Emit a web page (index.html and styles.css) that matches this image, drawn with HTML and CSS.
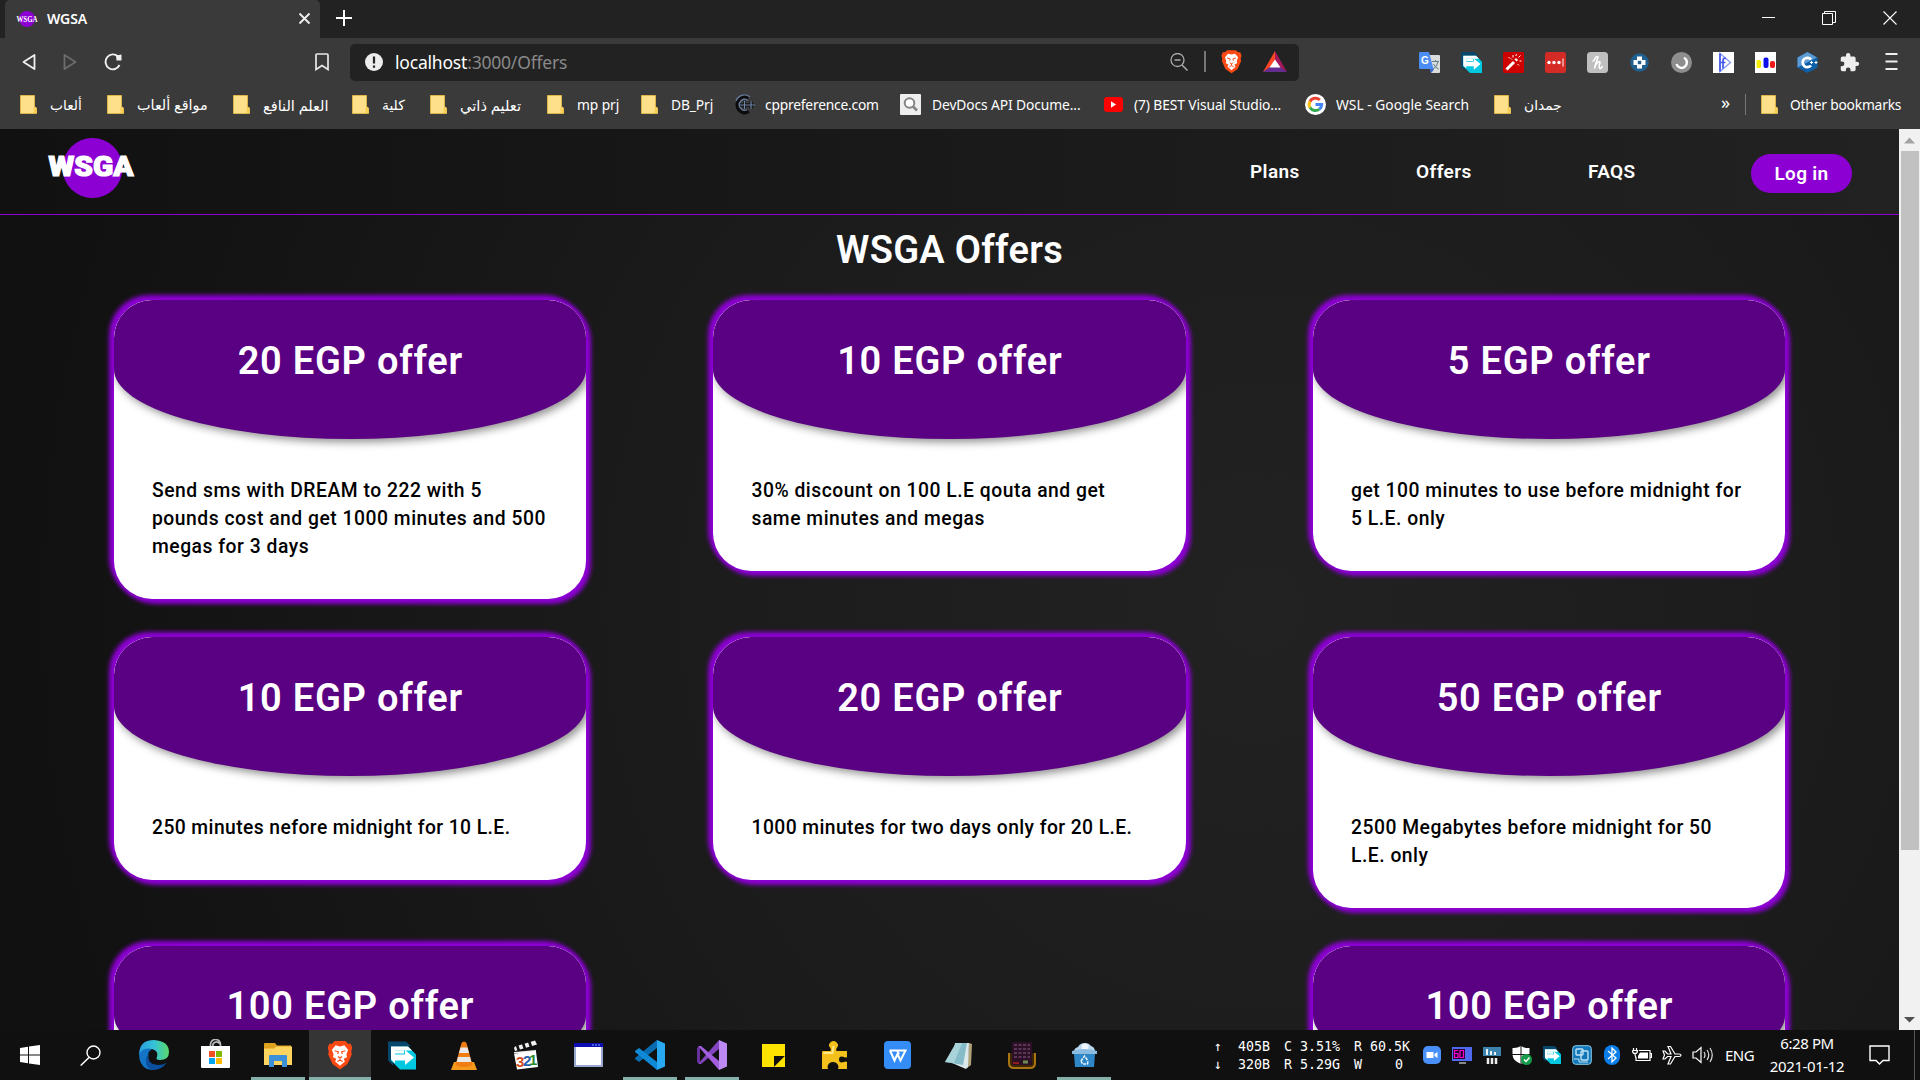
FILE: index.html
```html
<!DOCTYPE html>
<html lang="en">
<head>
<meta charset="utf-8">
<title>WGSA</title>
<link rel="stylesheet" href="styles.css">
</head>
<body>
<svg class="defs" width="0" height="0">
  <symbol id="folder" viewBox="0 0 17 19"><path d="M.5.5h14v11.500l2 1v5.500H.5z" fill="#ffe08a" stroke="#dcb54b"/><path d="M13.500 18v-5l1.500-1.500 1.500 1.500v5z" fill="#f5cf57"/></symbol>
  <symbol id="brave" viewBox="0 0 24 28"><path d="M7 1h10l2.500 2.500 2.500 0 1.500 4-1 3 .5 3-4 9-7 5-7-5-4-9 .5-3-1-3L2 3.500h2.500z" fill="#fb4a14"/><path d="M8 5l4 1 4-1 3.500 4-1.500 4.500.5 2.500-3 1.500 1 2.500-4.500 4-4.500-4 1-2.500-3-1.500.5-2.500L4.500 9z" fill="#fff"/><path d="M7 10l3.500 1-.7 2M17 10l-3.500 1 .7 2M10 15.500l2 1 2-1M12 16.500v2M9.500 20l2.500-1.200 2.500 1.200" fill="none" stroke="#fb4a14" stroke-width="1.100"/></symbol>
  <symbol id="connect" viewBox="0 0 28 28"><path d="M0 0h18l5 5H5v19l-5-5z" fill="#07476b"/><path d="M3 5h17l8 8v15H12l-9-9z" fill="#00c8e0"/><path d="M3 5h17l4 4H7v13l-4-4z" fill="#fff"/><path d="M7 9h9v3H7z" fill="#fff"/><path d="M6 13h11V8.500l9 7.500-9 7.500V19H6z" fill="#fff"/></symbol>
  <symbol id="puzzle" viewBox="0 0 24 24"><path d="M20.500 11H19V7a2 2 0 0 0-2-2h-4V3.500a2.500 2.500 0 0 0-5 0V5H4a2 2 0 0 0-2 2v3.800h1.500a2.700 2.700 0 0 1 0 5.400H2V20a2 2 0 0 0 2 2h3.800v-1.500a2.700 2.700 0 0 1 5.400 0V22H17a2 2 0 0 0 2-2v-4h1.500a2.500 2.500 0 0 0 0-5z"/></symbol>
</svg>

<div class="tabstrip">
  <div class="tab">
    <svg class="tab-icon" width="22" height="18" viewBox="0 0 22 18"><circle cx="11" cy="9" r="8" fill="#8d00d4"/><text x="0.500" y="11.500" textLength="21" lengthAdjust="spacingAndGlyphs" class="fav-text">WSGA</text></svg>
    <span class="tab-title">WGSA</span>
    <svg class="tab-close" width="13" height="13" viewBox="0 0 13 13"><path d="M1.500 1.500l10 10M11.500 1.500l-10 10" stroke="#eee" stroke-width="1.900"/></svg>
  </div>
  <svg class="new-tab" width="16" height="16" viewBox="0 0 16 16"><path d="M8 0v16M0 8h16" stroke="#fff" stroke-width="2"/></svg>
  <div class="window-controls">
    <svg width="13" height="14" viewBox="0 0 13 14"><path d="M0 6.500h13" stroke="#fff"/></svg>
    <svg width="14" height="14" viewBox="0 0 14 14"><path d="M.5 2.500h10v11H.5zM2.500 2.500v-2h11v11h-3" fill="none" stroke="#fff"/></svg>
    <svg width="14" height="14" viewBox="0 0 14 14"><path d="M.5.5l13 13M13.500.5l-13 13" stroke="#fff" stroke-width="1.100"/></svg>
  </div>
</div>

<div class="toolbar">
  <div class="nav-buttons">
    <svg width="14" height="18" viewBox="0 0 14 18"><path d="M12.500 2v14L1.500 9z" fill="none" stroke="#f0f0f0" stroke-width="1.800" stroke-linejoin="round"/></svg>
    <svg width="14" height="18" viewBox="0 0 14 18"><path d="M1.500 2v14L12.500 9z" fill="none" stroke="#6c6c6c" stroke-width="1.800" stroke-linejoin="round"/></svg>
    <svg width="18" height="18" viewBox="0 0 18 18"><path d="M15.500 12A7.300 7.500 0 1 1 14 3.500" fill="none" stroke="#f0f0f0" stroke-width="1.900"/><path d="M12 2.500l5.500-1v6h-5z" fill="#f0f0f0"/></svg>
  </div>
  <svg class="bookmark-btn" width="14" height="18" viewBox="0 0 14 18"><path d="M1 2q0-1 1-1h10q1 0 1 1v14.500l-6-4-6 4z" fill="none" stroke="#e8e8e8" stroke-width="1.700"/></svg>
  <div class="address">
    <svg class="info" width="18" height="18" viewBox="0 0 18 18"><circle cx="9" cy="9" r="9" fill="#ececec"/><path d="M9 3.500v7M9 12.500v2.200" stroke="#222" stroke-width="2.200"/></svg>
    <span class="url"><b>localhost</b>:3000/Offers</span>
    <svg width="18" height="18" viewBox="0 0 18 18"><circle cx="7.500" cy="7" r="6.500" fill="none" stroke="#aaa" stroke-width="1.300"/><path d="M4.500 7h6M12 12l5.500 5.500" stroke="#aaa" stroke-width="1.500"/></svg>
    <span class="vline"></span>
    <svg width="21" height="25"><use href="#brave"/></svg>
    <svg class="bat" width="24" height="21" viewBox="0 0 24 21"><path d="M12 0L0 21l12-8z" fill="#ff4724"/><path d="M12 0l12 21-12-8z" fill="#a3195b"/><path d="M0 21h24l-7-5H7z" fill="#662d91"/><path d="M12 8.500L6.500 16.500h11z" fill="#fff"/></svg>
  </div>
  <div class="extensions">
    <svg viewBox="0 0 21 21"><path d="M9 3h11q1 0 1 1v16q0 1-1 1h-8z" fill="#dcdcdc"/><path d="M1 0h9l4.500 17H1q-1 0-1-1V1q0-1 1-1z" fill="#4b8cf5"/><path d="M11 17l1.500 4 2.500-4z" fill="#3367d6"/><text x="2" y="12" font-size="10" class="g-letter">G</text><path d="M13 9.500h7M16.500 8v1.500M19 10q-1 5-5 7M14.500 12q2 4 5 5" stroke="#607d8b" fill="none"/></svg>
    <svg viewBox="0 0 21 21"><use href="#connect"/></svg>
    <svg viewBox="0 0 21 21"><rect width="21" height="21" rx="1.500" fill="#cf0000"/><path d="M3.500 17.500L11 10M12.500 8.500l1.500-1.500" stroke="#fff" stroke-width="3"/><path d="M15.500 5.500l2-2M10 3v2.500M5.500 5l1.500 1.500M16.500 9h2M14.500 12l1.500 1.500M8 6.500l1 1M13.500 2l-.7 2" stroke="#fff"/></svg>
    <svg viewBox="0 0 21 21"><rect width="21" height="21" rx="2.500" fill="#d52b26"/><circle cx="4" cy="10.500" r="1.700" fill="#fff"/><circle cx="9" cy="10.500" r="1.700" fill="#fff"/><circle cx="14" cy="10.500" r="1.700" fill="#fff"/><path d="M18 6.500v8" stroke="#fff"/></svg>
    <svg viewBox="0 0 21 21"><rect width="21" height="21" rx="3.500" fill="#bfbfbf"/><path d="M7.500 16.500Q9 11 11 5Q9.500 3.500 8 6.500Q7 9 5.500 9.500M8.500 13q4-5 4.500-2.500Q11.500 16 13 16.500q1.500 0 2.500-2.500" fill="none" stroke="#fff" stroke-width="1.600"/></svg>
    <svg viewBox="0 0 21 21"><circle cx="10.500" cy="10.500" r="9.300" fill="#20608f"/><path d="M8 4.500h5V8h3.500v5H13v3.500H8V13H4.500V8H8z" fill="#fff"/><rect x="8.800" y="8.800" width="3.400" height="3.400" fill="#20608f"/></svg>
    <svg viewBox="0 0 21 21"><circle cx="10.500" cy="10.500" r="10.500" fill="#8e8e8e"/><path d="M13 5.800A5.300 5.300 0 1 1 5.500 12" fill="none" stroke="#fff" stroke-width="2.400"/></svg>
    <svg viewBox="0 0 21 21"><rect width="21" height="21" fill="#fff"/><path d="M7 1.500l10.500 9L7 19.500z" fill="none" stroke="#8c9cf6" stroke-width="1.400"/><path d="M7 1.500v18M13 6.500q-3-1-3 2v8M7.500 10.500h5" fill="none" stroke="#4458ea" stroke-width="1.700"/></svg>
    <svg viewBox="0 0 21 21"><rect width="21" height="21" fill="#fff"/><rect x="1.500" y="8" width="4.500" height="8" rx="1.500" fill="#f8ec00"/><rect x="8.500" y="5.500" width="5" height="10.500" rx="2" fill="#1010e8"/><rect x="15" y="9" width="5" height="7" rx="2" fill="#f01818"/></svg>
    <svg viewBox="0 0 21 21"><path d="M10.500 0L20.500 5.500v10L10.500 21 .5 15.500v-10z" fill="#0d5fa8"/><path d="M10.500 0L20 5.500 .5 15.500v-10z" fill="#5d9bd4"/><path d="M14 7.500a4.700 4.700 0 1 0 0 6" fill="none" stroke="#fff" stroke-width="2.700"/><path d="M13 10.500h3M14.500 9v3M17.500 10.500h3M19 9v3" stroke="#fff"/></svg>
    <svg viewBox="0 0 21 21" class="ext-puzzle"><use href="#puzzle"/></svg>
    <svg viewBox="0 0 21 21"><path d="M4.500 2h12M4.500 9.500h12M4.500 17h12" stroke="#eee" stroke-width="1.800"/></svg>
  </div>
</div>

<div class="bookmarks">
  <span class="bm bm-1"><svg width="17" height="19"><use href="#folder"/></svg><i>ألعاب</i></span>
  <span class="bm bm-2"><svg width="17" height="19"><use href="#folder"/></svg><i>مواقع ألعاب</i></span>
  <span class="bm bm-3"><svg width="17" height="19"><use href="#folder"/></svg><i>العلم النافع</i></span>
  <span class="bm bm-4"><svg width="17" height="19"><use href="#folder"/></svg><i>كلية</i></span>
  <span class="bm bm-5"><svg width="17" height="19"><use href="#folder"/></svg><i>تعليم ذاتي</i></span>
  <span class="bm bm-6"><svg width="17" height="19"><use href="#folder"/></svg><i>mp prj</i></span>
  <span class="bm bm-7"><svg width="17" height="19"><use href="#folder"/></svg><i>DB_Prj</i></span>
  <span class="bm bm-8 site"><svg width="21" height="21" viewBox="0 0 21 21"><path d="M14.500 4A7 8 0 1 0 14.500 17" fill="none" stroke="#0c0c0c" stroke-width="4"/><path d="M16 3A9 9.500 0 0 0 2 7M13.500 6.500A5 5.500 0 1 0 13 15.500" fill="none" stroke="#67789a" stroke-width="1.400"/><path d="M6 11h14M10.500 7.500v7M17 7v8" stroke="#0c0c0c" stroke-width="3"/><path d="M6 11h15M10.500 7v8M17 7v8" stroke="#7488aa" stroke-width="1.200"/></svg><i>cppreference.com</i></span>
  <span class="bm bm-9 site"><svg width="21" height="21" viewBox="0 0 21 21"><rect width="21" height="21" rx="1" fill="#eee"/><circle cx="9.500" cy="9" r="4.800" fill="#fff" stroke="#858585" stroke-width="2"/><path d="M13 12.500l4 4" stroke="#858585" stroke-width="2.600"/></svg><i>DevDocs API Docume...</i></span>
  <span class="bm bm-10"><svg width="19" height="15" viewBox="0 0 19 15"><rect width="19" height="15" rx="3" fill="#f00"/><path d="M7 4.300l5 3.200-5 3.200z" fill="#fff"/></svg><i>(7) BEST Visual Studio...</i></span>
  <span class="bm bm-11"><svg width="21" height="21" viewBox="0 0 21 21"><circle cx="10.500" cy="10.500" r="10.500" fill="#fff"/><g fill="none" stroke-width="3"><path d="M14.800 6A6.200 6.200 0 0 0 5 7.500" stroke="#ea4335"/><path d="M5 7.500a6.200 6.200 0 0 0 0 6" stroke="#fbbc05"/><path d="M5 13.500a6.200 6.200 0 0 0 9.500 1.500" stroke="#34a853"/><path d="M14.500 15a6.200 6.200 0 0 0 2.200-4.500H10.500" stroke="#4285f4"/></g></svg><i>WSL - Google Search</i></span>
  <span class="bm bm-12"><svg width="17" height="19"><use href="#folder"/></svg><i>جمدان</i></span>
  <span class="more">»</span>
  <span class="vline"></span>
  <span class="bm other"><svg width="17" height="19"><use href="#folder"/></svg><i>Other bookmarks</i></span>
</div>

<div class="viewport">
  <div class="page">
    <header class="site-nav">
      <svg class="logo" width="90" height="60" viewBox="0 0 90 60"><circle cx="45.500" cy="30" r="30" fill="#8d00d4"/><text x="1.500" y="37.500" textLength="85" lengthAdjust="spacingAndGlyphs" class="logo-text">WSGA</text></svg>
      <nav><a class="n-plans">Plans</a><a class="n-offers">Offers</a><a class="n-faqs">FAQS</a></nav>
      <a class="login">Log in</a>
    </header>
    <h1>WSGA Offers</h1>
    <main class="offers">
      <article class="card"><h2>20 EGP offer</h2><p>Send sms with DREAM to 222 with 5<br>pounds cost and get 1000 minutes and 500<br>megas for 3 days</p></article>
      <article class="card"><h2>10 EGP offer</h2><p>30% discount on 100 L.E qouta and get<br>same minutes and megas</p></article>
      <article class="card"><h2>5 EGP offer</h2><p>get 100 minutes to use before midnight for<br>5 L.E. only</p></article>
      <article class="card"><h2>10 EGP offer</h2><p class="tight">250 minutes nefore midnight for 10 L.E.</p></article>
      <article class="card"><h2>20 EGP offer</h2><p class="tight">1000 minutes for two days only for 20 L.E.</p></article>
      <article class="card"><h2>50 EGP offer</h2><p>2500 Megabytes before midnight for 50<br>L.E. only</p></article>
      <article class="card next"><h2>100 EGP offer</h2><p></p></article>
      <article class="card next last"><h2>100 EGP offer</h2><p></p></article>
    </main>
  </div>
  <div class="scrollbar">
    <svg width="21" height="22" viewBox="0 0 21 22"><path d="M5 14.500l5.500-6 5.500 6z" fill="#a3a3a3"/></svg>
    <div class="thumb"></div>
    <svg class="down" width="21" height="22" viewBox="0 0 21 22"><path d="M5 9l5.500 5.500L16 9z" fill="#505050"/></svg>
  </div>
</div>

<footer class="taskbar">
  <div class="system">
    <span><svg width="20" height="20" viewBox="0 0 20 20"><path d="M0 3l8-1.300V9.500H0zM9 1.500L20 0v9.500H9zM0 10.500h8v7.800L0 17zM9 10.500h11V20L9 18.500z" fill="#fff"/></svg></span>
    <span><svg width="21" height="21" viewBox="0 0 21 21"><circle cx="13.500" cy="7.500" r="6.500" fill="none" stroke="#fff" stroke-width="1.400"/><path d="M9 12.500L.7 20.500" stroke="#fff" stroke-width="1.500"/></svg></span>
  </div>
  <div class="apps">
    <span><svg width="30" height="30" viewBox="0 0 30 30"><defs><linearGradient id="eg" x1="0" x2="1"><stop offset="0" stop-color="#2a9de0"/><stop offset=".5" stop-color="#35c1d8"/><stop offset="1" stop-color="#5bd86a"/></linearGradient></defs><path d="M0 15Q0 0 15 0q15 1 15 12 0 8-9 8-5 0-3-3 2-6-5-8Q4 8 0 15z" fill="url(#eg)"/><path d="M0 14q5-7 13-5-5 3-4 9 2 8 10 10-5 3-11 1Q0 25 0 14z" fill="#1373c4"/><path d="M10 14q-3 10 9 11 6 0 9-3-5 8-14 8-8-2-7-10 0-4 3-6z" fill="#0c4f9e"/></svg></span>
    <span class="store"><svg width="29" height="29" viewBox="0 0 29 29"><path d="M9.500 9V5.500a5 5 0 0 1 10 0V9M12 9V5a4 4 0 0 1 7 0" fill="none" stroke="#bbb" stroke-width="1.700"/><path d="M0 7h29v21q0 1-1 1H1q-1 0-1-1z" fill="#fff"/><path d="M8 12h6v6H8z" fill="#f25022"/><path d="M15 12h6v6h-6z" fill="#7fba00"/><path d="M8 19h6v6H8z" fill="#00a4ef"/><path d="M15 19h6v6h-6z" fill="#ffb900"/></svg></span>
    <span class="open"><svg width="28" height="24" viewBox="0 0 28 24"><path d="M0 1q0-1 1-1h10l2 2.500h14v4H0z" fill="#dca11d"/><path d="M0 5.500h10l2-2h16V22H0z" fill="#fcd45f"/><path d="M5 24V13q0-1 1-1h16q1 0 1 1v11h-5v-6h-8v6z" fill="#3b90d8"/></svg></span>
    <span class="active"><svg width="26" height="30"><use href="#brave"/></svg></span>
    <span><svg width="28" height="29"><use href="#connect"/></svg></span>
    <span><svg width="26" height="29" viewBox="0 0 26 29"><path d="M3 21h20l3 8H0z" fill="#f59a1c"/><path d="M10.500 2q2.500-3 5 0l6 22q-8.500 4-17 0z" fill="#ef7d12"/><path d="M9.500 6.500h7l1.500 5.500H8zM7 16h12l1.300 5H5.700z" fill="#e8e8e8"/></svg></span>
    <span><svg width="29" height="30" viewBox="0 0 29 30"><path d="M2 8l1-1.500 20-6 2 4L3 11zM2 12l22-2v3H2z" fill="#f0f0f0"/><path d="M5 5l2 6M11 3l2 6M17 1l2 6" stroke="#111" stroke-width="2.600"/><path d="M2 13.500l22-2 2 15.500-21 2.500z" fill="#fff"/><g font-size="15" class="clap"><text x="4" y="26.500" fill="#d34b1c">3</text><text x="11" y="25.500" fill="#2560b0">2</text><text x="17" y="24.500" fill="#2a8a2a">1</text></g></svg></span>
    <span><svg width="29" height="24" viewBox="0 0 29 24"><rect x="1" y="1" width="27" height="22" fill="#fff" stroke="#9aa8d0" stroke-width="2"/><path d="M0 0h29v4H0z" fill="#0d0db0"/><path d="M18 2h8" stroke="#7fb0ff" stroke-dasharray="2 1"/></svg></span>
    <span class="open"><svg width="30" height="30" viewBox="0 0 30 30"><path d="M22 0v8L4 22l-4-3v-1z" fill="#0a6cb0"/><path d="M0 12v-1l4-3 18 14v8z" fill="#0f8ad6"/><path d="M22 0l8 3.500v23L22 30z" fill="#29a9f2"/></svg></span>
    <span class="open"><svg width="30" height="30" viewBox="0 0 30 30"><path d="M0 8l3-2v18l-3-2z" fill="#68309c"/><path d="M22 0v9L4 24H1z" fill="#8446c0"/><path d="M1 6h3l18 15v9z" fill="#a25ede"/><path d="M22 0l8 3.500v23L22 30z" fill="#bd8af4"/></svg></span>
    <span class="note"><svg width="23" height="23" viewBox="0 0 23 23"><path d="M0 0h23v12L12 23H0z" fill="#ffe300"/><path d="M12 12h11L12 23z" fill="#111"/><path d="M23 12v11H12z" fill="#ffe300"/></svg></span>
    <span class="gold"><svg width="26" height="29" viewBox="0 0 26 29"><path d="M0 11q0-1 1-1h7.500q1-2-.5-3.500Q6.500 5 7 3.500 8.500 0 11.500 0t4.500 3.500Q16.500 5 15 6.500T14.500 10H25v6q-1 1-3 0-5-1.500-5 2.500t5 2.500q2-1 3 0v7h-9q1-2 0-4-1.500-3-5-3t-5 3q-1 2 0 4H0z" fill="#f3c01c"/><path d="M1.500 12h9l1-7" fill="none" stroke="#ffe98a" stroke-width="2"/></svg></span>
    <span class="wps"><svg width="27" height="28" viewBox="0 0 27 28"><rect width="27" height="28" rx="4" fill="#348cf6"/><path d="M5.500 9.500h7M6 9.500l4.500 10 3-6.500 3 6.500 5-10H13l2 4" fill="none" stroke="#fff" stroke-width="2"/></svg></span>
    <span class="notes"><svg width="28" height="28" viewBox="0 0 28 28"><path d="M24 2l3 1-1 21-4 3z" fill="#b0a37a"/><path d="M10 2h14l-1 24-2 2-14-6z" fill="#dce9ea"/><path d="M11 2l11 0-4 22L0 21z" fill="#86bcc8"/><path d="M11 2l6 0-8 20-9-1z" fill="#a8d3d9"/></svg></span>
    <span><svg width="28" height="28" viewBox="0 0 28 28"><path d="M1 12v10q0 5 5 5h16q5 0 5-5V12" fill="#3e2504" stroke="#a87511" stroke-width="2"/><rect x="4" y="1" width="20" height="23" fill="#2c1026"/><path d="M6 4h16M6 8h16M6 12h16M6 16h16" stroke="#5c3658" stroke-width="1.800" stroke-dasharray="3 1.500"/><path d="M5 22h6" stroke="#901c20" stroke-width="2"/><path d="M15 21h5" stroke="#6b8c52" stroke-width="3"/></svg></span>
    <span class="open"><svg width="25" height="24" viewBox="0 0 25 24"><path d="M2 9q0-4 4-5 2-4 7-4 4 0 6 3 4 1 4 6z" fill="#b9d8ee"/><circle cx="13" cy="4" r="3.500" fill="#eef6fb"/><path d="M0 8q12-4 25 0v3H0z" fill="#8bbce0"/><path d="M2 11h21l-1 13H3z" fill="#2f86c6"/><path d="M9 18l3.500-5 3.500 5M9 18l1.500 3h5L16 18" fill="none" stroke="#e6f4ff" stroke-width="1.500" stroke-dasharray="3 1"/></svg></span>
  </div>
  <div class="stats">
    <span>↑</span><span class="r">405B</span><span>C</span><span class="r">3.51%</span><span>R</span><span class="r">60.5K</span>
    <span>↓</span><span class="r">320B</span><span>R</span><span class="r">5.29G</span><span>W</span><span class="r zero">0</span>
  </div>
  <div class="tray">
    <span><svg width="18" height="18" viewBox="0 0 18 18"><rect width="18" height="18" rx="5" fill="#4a90fa"/><path d="M3.500 6h7v6h-7zM11.500 8l3-2v6l-3-2z" fill="#fff"/></svg></span>
    <span><svg width="20" height="17" viewBox="0 0 20 17"><rect width="20" height="14" fill="#4f6af0"/><rect x="1" y="2" width="12" height="10" fill="#230030"/><path d="M6 3.500H2.500v7H6v-4H2.500M8 3.500h3.500v7H8z" fill="none" stroke="#f0c" stroke-width="1.200"/><path d="M7 16h7" stroke="#888" stroke-width="2"/></svg></span>
    <span><svg width="18" height="17" viewBox="0 0 18 17"><rect width="18" height="9" fill="#3c84ae"/><path d="M4 2v6M8 4v4M12 5v3" stroke="#fff" stroke-width="1.800"/><path d="M5 11v6M9 11v6M13 11v6" stroke="#eee" stroke-width="2.500"/></svg></span>
    <span><svg width="20" height="19" viewBox="0 0 20 19"><path d="M9 0q4 2.500 8.500 2v7Q16 15 9 18 1 15 .5 9V2Q5 2.500 9 0z" fill="#fff"/><path d="M9 0v18M0 8.500h18" stroke="#111"/><circle cx="14.500" cy="13.500" r="5.500" fill="#169a4b"/><path d="M12 13.500l2 2 3.500-4" fill="none" stroke="#fff" stroke-width="1.300"/></svg></span>
    <span><svg width="18" height="18"><use href="#connect"/></svg></span>
    <span><svg width="20" height="20" viewBox="0 0 20 20"><rect x=".7" y=".7" width="18.600" height="18.600" rx="3" fill="#1277b8" stroke="#8dcbe8"/><rect x="4" y="4" width="7" height="6" rx="1" fill="none" stroke="#bfe4f5" stroke-width="1.400"/><rect x="9" y="6" width="7" height="9" rx="1" fill="none" stroke="#bfe4f5" stroke-width="1.400"/><path d="M2 14h5v3h9" fill="none" stroke="#bfe4f5"/></svg></span>
    <span><svg width="16" height="20" viewBox="0 0 16 20"><rect width="16" height="20" rx="8" fill="#0a7de8"/><path d="M4 6l8 7-4 4V3l4 4-8 7" fill="none" stroke="#fff" stroke-width="1.300"/></svg></span>
    <span><svg width="20" height="15" viewBox="0 0 20 15"><path d="M7 2.500h11v10H4V9M18 5.500h1.500v4H18" fill="none" stroke="#fff" stroke-width="1.200"/><path d="M8 4.500h8v6H6V8z" fill="#fff"/><path d="M1.500 0v2M4.500 0v2M.5 2.500h5q0 3-2.500 3T.5 2.500M3 5.500q0 3 1 4" stroke="#fff" fill="none" stroke-width="1.200"/></svg></span>
    <span><svg width="20" height="20" viewBox="0 0 20 20"><path d="M1 6h2l2.500 3H9L6 1.500h2.500L13 9h4q2 0 2 1.200T17 11.500h-4L8.500 19H6l3-7.500H5.500L3 14H1l1.500-4z" fill="none" stroke="#fff" stroke-width="1.200"/></svg></span>
    <span><svg width="21" height="18" viewBox="0 0 21 18"><path d="M1 6h3l5-4.500v15L4 12H1z" fill="none" stroke="#fff" stroke-width="1.200"/><path d="M12 6q2 3 0 6M15 4q3.500 5 0 10M18 2q4.500 7 0 14" fill="none" stroke="#ddd" stroke-width="1.200"/></svg></span>
  </div>
  <span class="lang">ENG</span>
  <span class="clock"><b>6:28 PM</b><b>2021-01-12</b></span>
  <svg class="notif" width="21" height="20" viewBox="0 0 21 20"><path d="M1 1h19v14.500h-6l-3.500 3.500-3.500-3.500H1z" fill="none" stroke="#fff" stroke-width="1.400"/></svg>
  <span class="peek"></span>
</footer>
</body>
</html>
```
FILE: styles.css
```css
* { box-sizing: border-box; }
html, body { margin: 0; height: 1080px; overflow: hidden; background: #101010; }
body { display: flex; flex-direction: column; width: 1920px; font-family: "Noto Sans", "Open Sans", "DejaVu Sans", sans-serif; color: #fff; }
svg { display: block; flex: none; }
.defs { position: absolute; }
b, i { font-weight: inherit; font-style: normal; }

/* Browser chrome */
.tabstrip { height: 38px; flex: none; display: flex; align-items: center; background: #222; padding-left: 5px; }
.tab { width: 315px; height: 38px; display: flex; align-items: center; background: #3a3a3a; border-radius: 5px 5px 0 0; padding: 0 9px 0 11px; }
.tab-icon { overflow: visible; }
.tab-title { flex: 1; margin: -2px 0 0 9px; font-size: 14px; font-weight: 600; letter-spacing: -.1px; }
.tab-close { margin-top: -2px; }
.fav-text { font: 700 8px "Liberation Serif", serif; fill: #fff; }
.new-tab { margin: -2px 0 0 16px; }
.window-controls { display: flex; gap: 47px; margin: -2px 23px 0 auto; }
.toolbar { height: 43px; flex: none; display: flex; align-items: center; background: #3a3a3a; padding-top: 6px; }
.nav-buttons { display: flex; gap: 27px; padding-left: 22px; width: 315px; margin-top: -2px; }
.bookmark-btn { margin: -2px 21px 0 0; }
.address { width: 949px; height: 37px; display: flex; align-items: center; background: #222; border-radius: 5px; padding: 0 12px 2px 15px; }
.url { margin-left: 12px; flex: 1; font-size: 17.500px; letter-spacing: -.2px; color: #898989; }
.url b { color: #fff; }
.vline { width: 1px; height: 21px; background: #777; }
.address .vline { width: 2px; margin: 0 15px 0 16px; }
.bat { margin-left: 21px; }
.extensions { display: flex; gap: 21px; margin: -1px 0 0 120px; }
.extensions svg { width: 21px; height: 21px; }
.g-letter { font-family: "Liberation Sans", sans-serif; font-weight: 700; fill: #fff; }
.ext-puzzle { fill: #eee; }
.bookmarks { height: 48px; flex: none; display: flex; align-items: center; background: #3a3a3a; padding: 0 0 1px 20px; font-size: 13.800px; letter-spacing: -.1px; white-space: nowrap; }
.bm { display: flex; align-items: center; gap: 13px; flex: none; }
.site { gap: 10px; }
.bm-1 { width: 87px; } .bm-2 { width: 126px; font-size: 14.400px; } .bm-3 { width: 119px; font-size: 14.500px; } .bm-4 { width: 78px; }
.bm-5 { width: 117px; font-size: 14.700px; } .bm-6 { width: 94px; } .bm-7 { width: 93px; }
.bm-8 { width: 166px; letter-spacing: -.2px; }
.bm-9 { width: 204px; gap: 11px; } .bm-10 { width: 201px; gap: 11px; } .bm-11 { width: 189px; gap: 10px; letter-spacing: 0; } .bm-12 { width: 227px; }
.more { width: 24px; font-size: 18px; line-height: 18px; margin-top: -6px; }
.bookmarks .vline { margin-right: 15px; }
.other { gap: 12px; letter-spacing: -.2px; }

/* Offers page */
.viewport { height: 901px; flex: none; display: flex; }
.page { width: 1899px; height: 901px; overflow: hidden; font-family: Roboto, "Liberation Sans", sans-serif; font-weight: 500; background: radial-gradient(circle 1250px at 1260px 480px, #222 0, #1b1b1b 50%, #111 100%); }
.site-nav { height: 86px; display: flex; align-items: center; border-bottom: 1px solid #8d00d4; background: linear-gradient(to right, #111, #222); padding: 0 47px; }
.logo { margin-top: -7px; }
.logo-text { font: 900 28px Roboto, sans-serif; fill: #fff; stroke: #fff; stroke-width: 1.200px; }
.site-nav nav { display: flex; margin-left: auto; font-size: 19px; font-weight: 600; letter-spacing: .4px; }
.n-plans { width: 166px; } .n-offers { width: 172px; } .n-faqs { width: 163px; }
.login { width: 101px; height: 39px; border-radius: 20px; background: #8d00d4; text-align: center; font-size: 19px; font-weight: 600; line-height: 39px; margin-top: 4px; letter-spacing: .3px; }
h1, h2, p { margin: 0; font-weight: 500; }
h1 { height: 85px; padding-top: 12px; text-align: center; font-size: 38px; font-weight: 600; line-height: 46px; letter-spacing: .3px; }
.offers { display: grid; grid-template-columns: repeat(3, 472.500px); column-gap: 127px; row-gap: 38px; align-items: start; padding-left: 113.500px; }
.card { border-radius: 38px; background: #fff; color: #000; box-shadow: 3px 3px 4px 2px #8d00d4, -3px -3px 4px 2px #8d00d4; overflow: hidden; }
.card h2 { height: 139px; padding: 38px 0 0 1px; text-align: center; font-size: 38px; font-weight: 600; line-height: 46px; letter-spacing: .75px; color: #fff; background: #5a0082; border-radius: 38px 38px 50% 50%; box-shadow: 3px 3px 8px rgba(0, 0, 0, .45); }
.card.next h2 { padding-top: 37px; }
.card p { padding: 38px 0 38px 38.500px; font-size: 19.300px; line-height: 28px; letter-spacing: .52px; white-space: nowrap; }
.card .tight { letter-spacing: .42px; }
.last { grid-column: 3; }
.scrollbar { width: 21px; display: flex; flex-direction: column; align-items: center; background: #f1f1f1; }
.thumb { width: 18px; height: 699px; background: #c1c1c1; }
.down { margin-top: auto; }

/* Taskbar */
.taskbar { height: 50px; flex: none; display: flex; align-items: center; background: #101010; }
.system, .apps, .tray { display: flex; height: 50px; }
.system span, .apps span, .tray span { display: flex; align-items: center; justify-content: center; }
.system { margin-right: 3px; }
.system span { width: 60px; }
.apps span { width: 62px; border-bottom: 3px solid transparent; padding-top: 3px; background-clip: padding-box; }
.apps .open { border-image: linear-gradient(to right, transparent 5px, #84b1a9 5px, #84b1a9 57px, transparent 57px) 1; border-width: 0 0 3px; }
.apps .active { background: #353535; border-bottom-color: #84b1a9; }
.apps .store { padding: 0 1px 1px 0; }
.apps .note, .apps .gold, .apps .wps, .apps .notes { padding-right: 2px; }
.clap { font-family: "Liberation Sans", sans-serif; font-weight: 700; }
.stats { width: 196px; display: grid; grid-template-columns: 12px 44px 28px 42px 30px 40px; margin: 2px 0 0 99px; font: 13.300px/18px "DejaVu Sans Mono", monospace; }
.stats span:nth-child(6n+3), .stats span:nth-child(6n+5) { padding-left: 14px; }
.r { text-align: right; }
.zero { padding-right: 7px; }
.tray { margin-left: 7px; }
.tray span { width: 30px; }
.lang { width: 43px; margin-left: 8px; font-size: 15px; letter-spacing: -.5px; }
.clock { width: 78px; text-align: center; font-size: 15px; line-height: 23px; letter-spacing: -.4px; margin-top: -1px; }
.clock b { display: block; }
.notif { margin-left: auto; }
.peek { width: 1px; height: 50px; margin: 0 5px 0 24px; background: #555; }
```
